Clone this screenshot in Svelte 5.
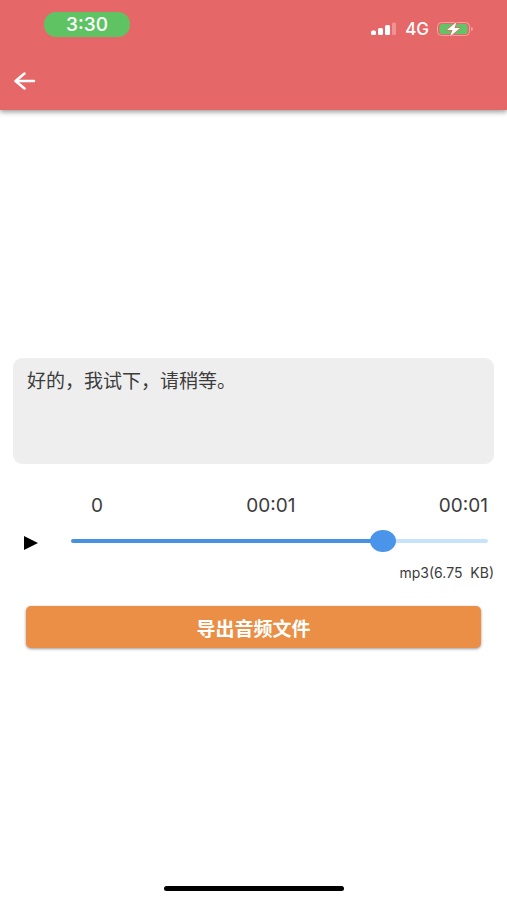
<script>
  let text = $state('好的，我试下，请稍等。');
  let position = $state(765);
  let playing = $state(false);

  const max = 1000;
  const thumbWidth = 26;

  // the thumb travels the track width minus its own width
  let ratio = $derived(position / max);
  let fill = $derived(`calc(${thumbWidth / 2}px + (100% - ${thumbWidth}px) * ${ratio})`);
</script>

<div class="screen">
  <header>
    <div class="status">
      <span class="clock">3:30</span>
      <div class="indicators">
        <svg class="signal" width="26" height="14" viewBox="0 0 26 14" aria-hidden="true">
          <rect x="0" y="8.500" width="5" height="4.500" rx="1.500" fill="#fff" />
          <rect x="7" y="6" width="5" height="7" rx="1.500" fill="#fff" />
          <rect x="14" y="3" width="5" height="10" rx="1.500" fill="#fff" />
          <rect x="21" y="0.500" width="4" height="12.500" rx="1.500" fill="#fff" opacity="0.3" />
        </svg>
        <span class="network">4G</span>
        <svg class="battery" width="36" height="16" viewBox="0 0 36 16" aria-hidden="true">
          <rect x="0.5" y="1.5" width="32" height="13" rx="4" fill="none" stroke="#f2a39f" />
          <rect x="2.500" y="3" width="28" height="10" rx="2.5" fill="#62c466" />
          <path d="M34 6v4q2-.6 2-2t-2-2z" fill="#f2a39f" />
          <path d="M19.5 1L10 9h5.500L13 15.500L23 7h-5.500z" fill="#fff" stroke="#e66767" stroke-width="1.500" stroke-linejoin="round" paint-order="stroke" />
        </svg>
      </div>
    </div>
    <button class="back" aria-label="返回">
      <svg width="22" height="18" viewBox="0 0 22 18" fill="none" stroke="#fff" stroke-width="2.500" stroke-linecap="round" stroke-linejoin="round">
        <path d="M20 9H2M10.500 1.500L1.500 9l9 7.500" />
      </svg>
    </button>
  </header>

  <main>
    <textarea aria-label="文本" bind:value={text}></textarea>

    <div class="player">
      <button class="play" aria-label="播放" aria-pressed={playing} onclick={() => (playing = !playing)}>
        <svg width="14" height="14" viewBox="0 0 14 14"><path d="M0 0L14 7L0 14z" fill="#000" /></svg>
      </button>
      <div class="timeline">
        <div class="times">
          <span>0</span>
          <span>00:01</span>
          <span>00:01</span>
        </div>
        <input type="range" min="0" {max} aria-label="播放进度" bind:value={position} style="--fill: {fill}" />
      </div>
    </div>

    <p class="size">mp3(6.75&nbsp; KB)</p>

    <button class="export">导出音频文件</button>
  </main>

  <div class="home"></div>
</div>

<style>
  :global(body) {
    margin: 0;
    background: #fff;
  }

  .screen {
    position: relative;
    display: flex;
    flex-direction: column;
    min-height: 100vh;
    color: #3c3c3c;
    font-family: Inter, "Noto Sans CJK SC", sans-serif;
  }

  header {
    box-sizing: border-box;
    height: 110px;
    background: #e66767;
    color: #fff;
    box-shadow: 0 2px 5px rgba(0, 0, 0, 0.4);
  }

  .status {
    display: flex;
    align-items: flex-start;
    justify-content: space-between;
    padding: 12px 34px 0 44px;
  }

  .clock {
    width: 86px;
    border-radius: 12px;
    background: #5fc363;
    font-size: 19px;
    font-weight: 500;
    line-height: 25px;
    text-align: center;
  }

  .indicators {
    display: flex;
    align-items: center;
    gap: 8px;
    padding-top: 8px;
  }

  .network {
    font-size: 17px;
    font-weight: 500;
    line-height: 18px;
  }

  button {
    border: none;
    padding: 0;
    cursor: pointer;
    font-family: inherit;
  }

  .back {
    display: flex;
    align-items: center;
    width: 48px;
    height: 48px;
    margin-top: 19px;
    padding-left: 14px;
    background: none;
  }

  main {
    display: flex;
    flex: 1;
    flex-direction: column;
    justify-content: center;
    padding: 0 13px 4px;
  }

  textarea {
    box-sizing: border-box;
    width: 100%;
    height: 106px;
    padding: 8px 14px;
    border: none;
    border-radius: 9px;
    outline: none;
    resize: none;
    background: #eee;
    color: #3c3c3c;
    font-family: "Noto Sans CJK SC", sans-serif;
    font-size: 19px;
    line-height: 28px;
  }

  .player {
    display: flex;
    align-items: flex-end;
    gap: 22px;
    margin-top: 30px;
    padding-right: 6px;
  }

  .play {
    display: flex;
    align-items: center;
    justify-content: center;
    width: 36px;
    height: 18px;
    background: none;
  }

  .timeline {
    flex: 1;
  }

  .times {
    display: flex;
    justify-content: space-between;
    padding-left: 20px;
    font-size: 19px;
    line-height: 24px;
  }

  input[type="range"] {
    display: block;
    width: 100%;
    height: 22px;
    margin: 12px 0 0;
    appearance: none;
    background: none;
    cursor: pointer;
  }

  input[type="range"]::-webkit-slider-runnable-track {
    height: 4px;
    border-radius: 2px;
    background: linear-gradient(to right, #4890e2 var(--fill), #c8e3f9 var(--fill));
  }

  input[type="range"]::-webkit-slider-thumb {
    width: 26px;
    height: 22px;
    margin-top: -9px;
    appearance: none;
    border-radius: 50%;
    background: #4a94ea;
  }

  .size {
    margin: 12px 0 24px;
    font-size: 14px;
    line-height: 18px;
    text-align: right;
  }

  .export {
    height: 42px;
    margin: 0 13px;
    border-radius: 5px;
    background: #ea8f45;
    box-shadow: 0 1px 3px rgba(0, 0, 0, 0.4);
    color: #fff;
    font-family: "Noto Sans CJK SC", sans-serif;
    font-size: 19px;
    font-weight: 700;
  }

  .home {
    position: absolute;
    bottom: 9px;
    left: 50%;
    width: 180px;
    height: 5px;
    border-radius: 3px;
    background: #000;
    transform: translateX(-50%);
  }
</style>
